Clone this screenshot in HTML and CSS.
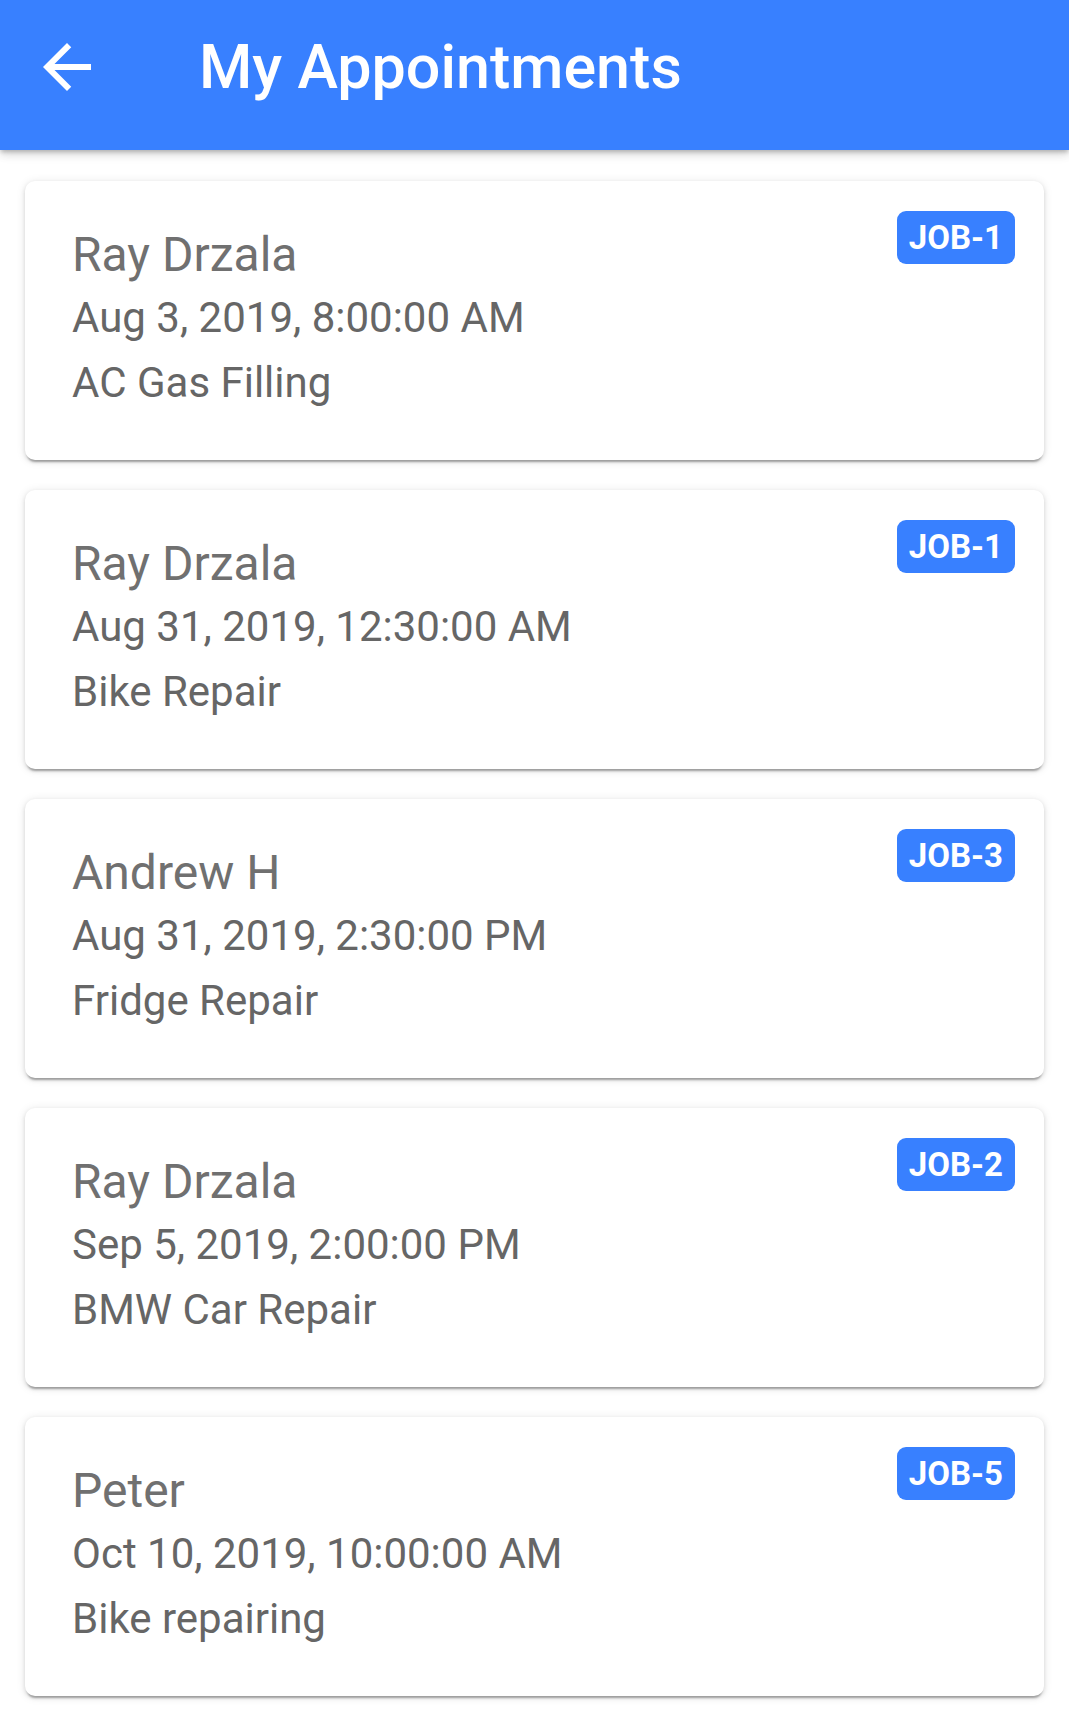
FILE: index.html
```html
<!DOCTYPE html>
<html>
<head>
<meta charset="utf-8">
<title>My Appointments</title>
<link rel="stylesheet" href="styles.css">
</head>
<body>
<header class="toolbar">
  <button class="back" aria-label="Back">
    <svg viewBox="0 0 24 24" width="72" height="72"><path fill="#fff" d="M20 11H7.83l5.59-5.59L12 4l-8 8 8 8 1.41-1.41L7.83 13H20v-2z"/></svg>
  </button>
  <h1 class="title">My Appointments</h1>
</header>
<main class="list">
  <div class="card">
    <span class="badge">JOB-1</span>
    <h2 class="name">Ray Drzala</h2>
    <p class="line">Aug 3, 2019, 8:00:00 AM</p>
    <p class="line">AC Gas Filling</p>
  </div>
  <div class="card">
    <span class="badge">JOB-1</span>
    <h2 class="name">Ray Drzala</h2>
    <p class="line">Aug 31, 2019, 12:30:00 AM</p>
    <p class="line">Bike Repair</p>
  </div>
  <div class="card">
    <span class="badge">JOB-3</span>
    <h2 class="name">Andrew H</h2>
    <p class="line">Aug 31, 2019, 2:30:00 PM</p>
    <p class="line">Fridge Repair</p>
  </div>
  <div class="card">
    <span class="badge">JOB-2</span>
    <h2 class="name">Ray Drzala</h2>
    <p class="line">Sep 5, 2019, 2:00:00 PM</p>
    <p class="line">BMW Car Repair</p>
  </div>
  <div class="card">
    <span class="badge">JOB-5</span>
    <h2 class="name">Peter</h2>
    <p class="line">Oct 10, 2019, 10:00:00 AM</p>
    <p class="line">Bike repairing</p>
  </div>
</main>
</body>
</html>
```
FILE: styles.css
```css
* { box-sizing: border-box; }
html, body {
  margin: 0;
  padding: 0;
  background: #ffffff;
  font-family: Roboto, "Liberation Sans", sans-serif;
}
.toolbar {
  position: relative;
  z-index: 2;
  height: 150px;
  padding-bottom: 16px;
  background: #3880ff;
  display: flex;
  align-items: center;
  box-shadow: 0 3px 4px -1px rgba(0,0,0,0.2), 0 5px 8px rgba(0,0,0,0.1), 0 2px 14px rgba(0,0,0,0.08);
}
.back {
  width: 72px;
  height: 72px;
  margin-left: 31px;
  padding: 0;
  border: 0;
  background: none;
  display: flex;
}
.title {
  margin: 0 0 0 96px;
  color: #ffffff;
  font-size: 61px;
  font-weight: 500;
  line-height: 1;
  letter-spacing: 0;
}
.list {
  padding: 31px 25px 25px;
  display: flex;
  flex-direction: column;
  gap: 30px;
}
.card {
  position: relative;
  height: 279px;
  padding: 46px 45px 0 47px;
  background: #ffffff;
  border-radius: 10px;
  box-shadow: 0 4px 2px -2px rgba(0,0,0,0.28), 0 2px 4px rgba(0,0,0,0.12), 0 1px 10px rgba(0,0,0,0.1);
}
.badge {
  position: absolute;
  top: 30px;
  right: 29px;
  height: 53px;
  padding: 0 12px;
  border-radius: 9px;
  background: #3880ff;
  color: #ffffff;
  font-size: 33px;
  font-weight: 700;
  line-height: 53px;
}
.name {
  margin: 0;
  font-size: 48px;
  font-weight: 400;
  line-height: 56px;
  color: #707070;
}
.line {
  margin: 5px 0 0;
  font-size: 42px;
  line-height: 60px;
  color: #666666;
}
```
